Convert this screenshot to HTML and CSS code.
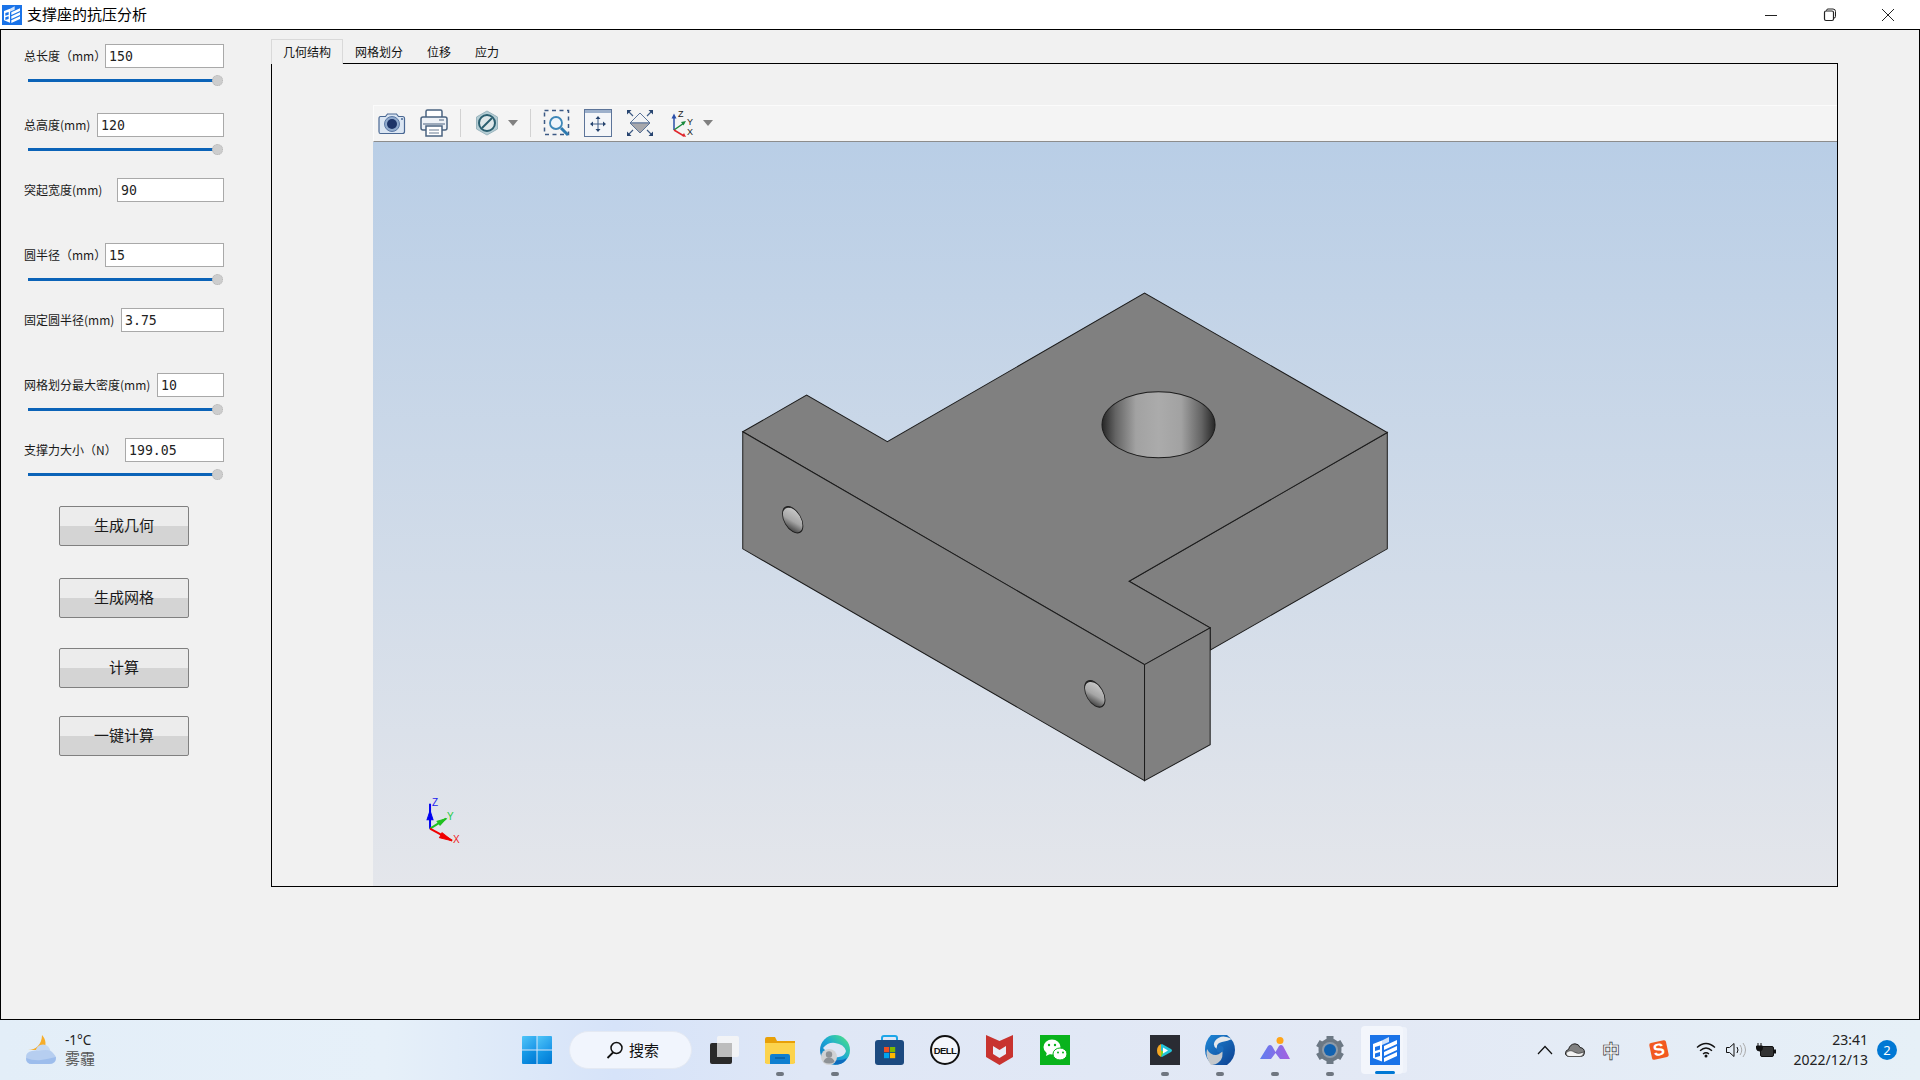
FILE: index.html
```html
<!DOCTYPE html>
<html lang="zh">
<head>
<meta charset="utf-8">
<title>支撑座的抗压分析</title>
<link rel="stylesheet" href="styles.css">
</head>
<body>
<header class="titlebar">
  <svg class="app-icon" viewBox="0 0 30 30"><use href="#appmark"/></svg>
  <span class="title">支撑座的抗压分析</span>
  <div class="win-btns">
    <svg class="wb" viewBox="0 0 14 14"><path d="M1 7.5h12" stroke="#222" fill="none"/></svg>
    <svg class="wb" viewBox="0 0 14 14"><path d="M3.5 2.8V2.5q0-1.5 1.5-1.5h5q2.5 0 2.5 2.5v5q0 1.5-1.5 1.5" stroke="#222" fill="none"/><rect x="1.5" y="3" width="9" height="9.5" rx="1.5" stroke="#222" fill="none" stroke-width="1.2"/></svg>
    <svg class="wb" viewBox="0 0 14 14"><path d="M1 1l12 12M13 1L1 13" stroke="#222" fill="none"/></svg>
  </div>
</header>

<div class="window">
  <aside class="side">
    <div class="group first">
      <div class="row"><label>总长度（mm）</label><input class="in w119" value="150"></div>
      <div class="slider"><i class="fill"></i><i class="thumb"></i></div>
    </div>
    <div class="group">
      <div class="row"><label>总高度(mm)</label><input class="in w127" value="120"></div>
      <div class="slider"><i class="fill"></i><i class="thumb"></i></div>
    </div>
    <div class="group">
      <div class="row"><label>突起宽度(mm)</label><input class="in w107" value="90"></div>
    </div>
    <div class="group">
      <div class="row"><label>圆半径（mm）</label><input class="in w119" value="15"></div>
      <div class="slider"><i class="fill"></i><i class="thumb"></i></div>
    </div>
    <div class="group">
      <div class="row"><label>固定圆半径(mm)</label><input class="in w103" value="3.75"></div>
    </div>
    <div class="group">
      <div class="row"><label>网格划分最大密度(mm)</label><input class="in w67" value="10"></div>
      <div class="slider"><i class="fill"></i><i class="thumb"></i></div>
    </div>
    <div class="group">
      <div class="row"><label>支撑力大小（N）</label><input class="in w99" value="199.05"></div>
      <div class="slider"><i class="fill"></i><i class="thumb"></i></div>
    </div>
    <button class="btn b1">生成几何</button>
    <button class="btn b2">生成网格</button>
    <button class="btn b3">计算</button>
    <button class="btn b4">一键计算</button>
  </aside>

  <main class="main">
    <nav class="tabs">
      <span class="tab active">几何结构</span>
      <span class="tab">网格划分</span>
      <span class="tab">位移</span>
      <span class="tab">应力</span>
    </nav>
    <section class="frame">
      <div class="toolbar">
        <svg class="tool t-cam" width="28" height="24" viewBox="0 0 28 24"><path d="M2.5 5.5h5l2-2.5h9l2 2.500h4q2 0 2 2v13q0 2-2 2h-22q-1.500 0-1.500-2v-13q0-2 1.500-2z" fill="#dbe6f3" stroke="#4a6893" stroke-width="1.2"/><circle cx="14" cy="13" r="7.500" fill="#8fa9cc" stroke="#5c7aa6"/><circle cx="14" cy="13" r="5" fill="#1d3468"/><circle cx="24" cy="8" r="1" fill="#4a6893"/></svg>
        <svg class="tool t-print" width="28" height="28" viewBox="0 0 28 28"><rect x="6" y="1" width="16" height="8" rx="1.500" fill="#fff" stroke="#4a6380" stroke-width="1.500"/><path d="M3 8h22q2 0 2 2v9q0 2-2 2H3q-2 0-2-2v-9q0-2 2-2z" fill="#eef2f7" stroke="#4a6380" stroke-width="1.500"/><path d="M3 15h22" stroke="#4a6380"/><rect x="6" y="17" width="16" height="10" fill="#fff" stroke="#4a6380" stroke-width="1.500"/><path d="M9 21h10M9 24h10" stroke="#9aa8b8" stroke-width="1.500"/><path d="M19 11h5" stroke="#8796a8" stroke-width="1.500"/></svg>
        <i class="sep s1"></i>
        <svg class="tool t-clip" width="24" height="26" viewBox="0 0 24 26"><path d="M12 1l10.500 6v12l-10.500 6L1.500 19V7z" fill="#b4cdd4" stroke="#9ab5be"/><circle cx="12" cy="13" r="8" fill="#dfe8ea" stroke="#2b5f70" stroke-width="2"/><path d="M7 18L17 8" stroke="#2b5f70" stroke-width="2"/></svg>
        <i class="caret c1"></i>
        <i class="sep s2"></i>
        <svg class="tool t-zoom" width="28" height="28" viewBox="0 0 28 28"><rect x="1.500" y="1.500" width="24" height="24" fill="none" stroke="#3c5a85" stroke-width="1.500" stroke-dasharray="4 3.500"/><circle cx="13" cy="14" r="6" fill="#eef5fb" stroke="#3d87b8" stroke-width="1.800"/><path d="M18 19l7 7" stroke="#2d7ab0" stroke-width="3"/></svg>
        <svg class="tool t-fit" width="28" height="28" viewBox="0 0 28 28"><rect x="0.500" y="0.500" width="27" height="27" fill="#f4f6f9" stroke="#5c7499"/><rect x="1" y="1" width="26" height="3" fill="#9db0cb"/><path d="M14 9v12M8 15h12" stroke="#3c5a85"/><path d="M14 7l-2.500 3h5zM14 23l-2.500-3h5zM6 15l3-2.500v5zM22 15l-3-2.500v5z" fill="#27446f"/></svg>
        <svg class="tool t-view" width="28" height="28" viewBox="0 0 28 28"><path d="M14 4l10 10H4z" fill="#f2f3f5" stroke="#5c7499"/><path d="M4 14h20L14 24z" fill="#a8a8ac" stroke="#5c7499"/><path d="M7 7L2.500 2.500M21 7l4.500-4.500M7 21l-4.500 4.500M21 21l4.500 4.500" stroke="#3c5a85" stroke-width="1.200"/><path d="M1 1h4.500L1 5.500zM27 1h-4.500L27 5.500zM1 27h4.500L1 22.500zM27 27h-4.500l4.500-4.500z" fill="#27446f"/></svg>
        <svg class="tool t-axes" width="24" height="30" viewBox="0 0 24 30"><path d="M4 22V9" stroke="#2a4fa8" stroke-width="1.500"/><path d="M4 5.500l-2.500 5h5z" fill="#2a4fa8"/><path d="M4 22l10-7" stroke="#1b8a3d" stroke-width="1.500"/><path d="M16 13l-5 1 2.500 3.500z" fill="#1b8a3d"/><path d="M4 22l10 6" stroke="#e0262c" stroke-width="1.500"/><path d="M16 29l-2-4-2 3z" fill="#e0262c"/><text x="8" y="9" class="ax-t">Z</text><text x="17" y="17" class="ax-t">Y</text><text x="17" y="27" class="ax-t">X</text></svg>
        <i class="caret c2"></i>
      </div>
      <div class="view">
        <svg class="scene" viewBox="373 142 1463 743">
          <defs>
            <linearGradient id="bore" x1="0" x2="1" y1="0" y2="0">
              <stop offset="0" stop-color="#262626"/><stop offset=".12" stop-color="#646464"/><stop offset=".3" stop-color="#a2a2a2"/><stop offset=".5" stop-color="#ababab"/><stop offset=".7" stop-color="#a2a2a2"/><stop offset=".88" stop-color="#646464"/><stop offset="1" stop-color="#262626"/>
            </linearGradient>
            <linearGradient id="pin" x1="0" x2="0" y1="0" y2="1">
              <stop offset="0" stop-color="#c8c8c8"/><stop offset=".55" stop-color="#a5a5a5"/><stop offset="1" stop-color="#444"/>
            </linearGradient>
          </defs>
          <g class="model">
            <polygon points="1128.500,580.700 1386.600,432 1386.600,548.300 1210,649.300 1209.600,627.300"/>
            <polygon points="742.500,431.300 806.300,394.700 887,441.300 1144,292.700 1386.600,432 1128.500,580.700 1209.600,627.300 1144,664"/>
            <polygon points="742.500,431.300 1144,664 1144,780 742.500,548.300"/>
            <polygon points="1144,664 1209.600,627.300 1209.600,744 1144,780"/>
            <ellipse cx="1158" cy="424.300" rx="56.500" ry="33" fill="url(#bore)"/>
            <g transform="translate(792.400 519.300) matrix(.866 .5 0 1 0 0)">
              <circle r="11.800" fill="url(#pin)"/>
              <path d="M-11.800 -1 A11.800 11.800 0 0 1 4 -11 A 14 14 0 0 0 -11.800 -1z" fill="#222" stroke="none"/>
            </g>
            <g transform="translate(1094.300 693.300) matrix(.866 .5 0 1 0 0)">
              <circle r="11.800" fill="url(#pin)"/>
              <path d="M-11.800 -1 A11.800 11.800 0 0 1 4 -11 A 14 14 0 0 0 -11.800 -1z" fill="#222" stroke="none"/>
            </g>
          </g>
          <g class="triad">
            <path d="M430 828V803" stroke="#0000f0" stroke-width="2"/><path d="M430 810l-3 9h6z" fill="#0000f0" stroke="#0000f0"/>
            <path d="M430 828l16-10" stroke="#20c020" stroke-width="2"/><path d="M446 818l-9 2.500 3 4z" fill="#20c020" stroke="#20c020"/>
            <path d="M430 828l22 12" stroke="#f00000" stroke-width="2"/><path d="M452 840l-10-8-2.500 5z" fill="#f00000" stroke="#f00000"/>
            <text x="432" y="805" class="tri" fill="#2222ee">Z</text>
            <text x="447" y="819" class="tri" fill="#22cc44">Y</text>
            <text x="453" y="842" class="tri" fill="#ee2222">X</text>
          </g>
        </svg>
      </div>
    </section>
  </main>
</div>

<footer class="taskbar">
  <div class="weather">
    <svg width="30" height="30" viewBox="0 0 30 30"><path d="M16 0c4 4 5 11 1 15H2c8 0 14-6 14-15z" fill="#f6ad2b"/><circle cx="17" cy="17" r="7.500" fill="#c6d9f3"/><path d="M0 22q0-5 6-6 3-1 6 0 12-3 15 2 3 3 3 5 0 6-7 6H6q-6 0-6-7z" fill="#b6cef0"/><path d="M0 23q8 3 15 2t15-3q0 7-7 7H6q-6 0-6-6z" fill="#9dbdec"/></svg>
    <div class="wtext"><span class="temp">-1°C</span><span class="cond">雾霾</span></div>
  </div>
  <svg class="start" width="30" height="30" viewBox="0 0 30 30">
    <defs><linearGradient id="w1" x1="0" y1="0" x2="1" y2="1"><stop offset="0" stop-color="#4fc5f8"/><stop offset="1" stop-color="#1a95e8"/></linearGradient>
    <linearGradient id="w2" x1="0" y1="0" x2="1" y2="1"><stop offset="0" stop-color="#1aa0ea"/><stop offset="1" stop-color="#0078d4"/></linearGradient></defs>
    <path d="M1 1h13.500v13.500H0V2q0-1 1-1z" fill="url(#w1)"/><path d="M15.500 1H29q1 0 1 1v12.500H15.500z" fill="url(#w1)"/><path d="M0 15.500h14.500V29H1q-1 0-1-1z" fill="url(#w2)"/><path d="M15.500 15.500H30V28q0 1-1 1H15.500z" fill="url(#w2)"/>
  </svg>
  <div class="search">
    <svg width="18" height="18" viewBox="0 0 18 18"><circle cx="10.500" cy="7" r="5.500" fill="none" stroke="#111" stroke-width="1.500"/><path d="M7 11.500L1.500 17" stroke="#111" stroke-width="1.800"/></svg>
    <span class="search-t">搜索</span>
  </div>
  <div class="apps">
    <span class="app"><svg viewBox="0 0 30 30"><rect x="0" y="8" width="22" height="21" rx="2" fill="#2a2a2a"/><rect x="7" y="1" width="22" height="21" rx="2" fill="#f6f6f6" fill-opacity=".85"/><rect x="7" y="8" width="15" height="14" fill="#bdbdbd"/></svg></span>
    <span class="app dot"><svg viewBox="0 0 30 28"><path d="M0 3q0-2 2-2h8l2 4h18v22H0z" fill="#e8a008"/><path d="M0 7h30v19q0 2-2 2H2q-2 0-2-2z" fill="#fcd34d"/><path d="M5 28v-8q0-2 2-2h16q2 0 2 2v8z" fill="#0f7fd0"/><path d="M10 22h10" stroke="#0a5ea0" stroke-width="1.500"/></svg></span>
    <span class="app dot"><svg viewBox="0 0 30 30"><defs><linearGradient id="ed" x1="0" y1="1" x2="1" y2="0"><stop offset="0" stop-color="#0f6cbd"/><stop offset=".5" stop-color="#1ba6d6"/><stop offset=".8" stop-color="#3bd0a0"/><stop offset="1" stop-color="#74db74"/></linearGradient></defs><circle cx="15" cy="15" r="15" fill="url(#ed)"/><path d="M3 13q5-6 12-5 9 1 11 8-1 5-7 6-5 1-9-2z" fill="#dde6f6"/><path d="M14 29q9 2 13-6-5 3-13 2z" fill="#0f6cbd"/><circle cx="9" cy="22" r="8" fill="#d0d2d4"/><circle cx="9" cy="19.500" r="3.200" fill="#8e9296"/><path d="M3.500 27q1-4.500 5.500-4.500t5.500 4.500q-5 3-11 0z" fill="#8e9296"/></svg></span>
    <span class="app"><svg viewBox="0 0 30 30"><path d="M7 6V3q0-2 2-2h11q2 0 2 2v3" fill="none" stroke="#1ca6e8" stroke-width="2"/><rect x="0" y="5" width="29" height="25" rx="3" fill="#1c4a80"/><rect x="9" y="12" width="5.200" height="5.200" fill="#f04f23"/><rect x="15" y="12" width="5.200" height="5.200" fill="#7fba00"/><rect x="9" y="18" width="5.200" height="5.200" fill="#00a4ef"/><rect x="15" y="18" width="5.200" height="5.200" fill="#ffb900"/></svg></span>
    <span class="app"><svg viewBox="0 0 30 30"><circle cx="15" cy="15" r="14" fill="#f4f6fb" stroke="#111" stroke-width="2"/><text x="15" y="18.500" class="dell">DELL</text></svg></span>
    <span class="app"><svg viewBox="0 0 30 30"><path d="M1 0l13.500 6L28 0v22l-13.500 8L1 22z" fill="#c8332f"/><path d="M8 11l6.500 4 6.500-4v8l-6.500 4-6.500-4z" fill="#e8edf7"/></svg></span>
    <span class="app"><svg viewBox="0 0 30 30"><rect width="30" height="30" fill="#09b31c"/><ellipse cx="12" cy="12" rx="8.500" ry="7.500" fill="#fff"/><path d="M7 17l-1 4 4-2z" fill="#fff"/><ellipse cx="20" cy="19" rx="7" ry="6" fill="#fff" stroke="#09b31c"/><circle cx="9" cy="10" r="1.200" fill="#09b31c"/><circle cx="15" cy="10" r="1.200" fill="#09b31c"/><circle cx="18" cy="17.500" r="1" fill="#09b31c"/><circle cx="23" cy="17.500" r="1" fill="#09b31c"/></svg></span>
    <span class="app slot"></span>
    <span class="app dot"><svg viewBox="0 0 30 30"><rect width="30" height="30" fill="#2a2c33"/><path d="M11 10q0-1 1-1l9 5q2 1.500 0 3l-9 5q-1 0-1-1z" fill="#22c3d8"/><path d="M11 9q-4 2-4 6.500t4 6.500z" fill="#f5a623"/><path d="M11 15.500l3 1-3 5.500z" fill="#7ed321"/><path d="M13 12.500l5 3-5 3z" fill="#fff"/></svg></span>
    <span class="app dot"><svg viewBox="0 0 30 30"><defs><linearGradient id="sb" x1="0" y1="0" x2="1" y2="1"><stop offset="0" stop-color="#1e88d8"/><stop offset="1" stop-color="#0d3f8f"/></linearGradient></defs><path d="M6 0h16q8 6 8 15t-8 15H8Q0 24 0 15T6 0z" fill="url(#sb)"/><path d="M6 30Q0 22 2 14q3 6 9 6 6-1 6-6 2 9-3 13-3 3-8 3z" fill="#c4c8cc"/><path d="M27 4Q16-2 10 6 7 11 12 14q-1-6 5-7 6-1 10-3z" fill="#e4e8ec"/><circle cx="15" cy="14" r="3.500" fill="#1c6dbd"/></svg></span>
    <span class="app dot"><svg viewBox="0 0 30 30"><defs><linearGradient id="mm" x1="0" y1="0" x2="1" y2="0"><stop offset="0" stop-color="#5f7ff0"/><stop offset="1" stop-color="#a55fe0"/></linearGradient></defs><circle cx="20" cy="5.500" r="3.500" fill="#ffa51a"/><path d="M0 24L8 11q2-2 4 0l3.500 6 3.500-6q2-2 4 0l7 13H20l-4.500-6-4.500 6z" fill="url(#mm)"/></svg></span>
    <span class="app dot"><svg viewBox="0 0 30 30"><circle cx="15" cy="15" r="11.500" fill="#6c7884"/><path d="M15 1v28M2.900 8l24.200 14M27.100 8L2.900 22" stroke="#6c7884" stroke-width="7"/><circle cx="15" cy="15" r="8" fill="#8d9aa8"/><circle cx="15" cy="15" r="6" fill="#1262b0"/></svg></span>
    <span class="app current"><svg viewBox="0 0 30 30"><use href="#appmark"/></svg></span>
  </div>
  <div class="tray">
    <svg class="tr-chev" width="16" height="10" viewBox="0 0 16 10"><path d="M1 9l7-7.500L15 9" fill="none" stroke="#111" stroke-width="1.200"/></svg>
    <svg class="tr-cloud" width="20" height="14" viewBox="0 0 20 14"><path d="M4 13.500Q0 13 .5 9.500 1 7 3.500 6.500 5 1 10 .8q4 .2 5 3.700 4.500.5 4.500 5 0 4-4 4z" fill="#808080" stroke="#222"/><path d="M1 10q4-4 8-1 4 3 10 0-1 4.500-4 4.500H4q-2.500 0-3-3.500z" fill="#f3f3f3" stroke="#222" stroke-width=".5"/></svg>
    <span class="tr-ime">中</span>
    <svg class="tr-sogou" width="22" height="22" viewBox="0 0 22 22"><rect x="2.500" y="2.500" width="17" height="17" rx="2" transform="rotate(-12 11 11)" fill="#f2591f"/><text x="11" y="16.500" class="sogou" transform="rotate(-12 11 11)">S</text></svg>
    <svg class="tr-wifi" width="20" height="16" viewBox="0 0 20 16"><path d="M1 5.500q9-8 18 0M4 8.800q6-5.500 12 0M7 12q3-2.500 6 0" fill="none" stroke="#111" stroke-width="1.300"/><circle cx="10" cy="14" r="1.500" fill="#111"/></svg>
    <svg class="tr-vol" width="20" height="16" viewBox="0 0 20 16"><path d="M.5 5.500h3L8 1.500v13l-4.500-4h-3z" fill="none" stroke="#111"/><path d="M11 5q2 3 0 6" fill="none" stroke="#111"/><path d="M14 3q3.500 5 0 10M17 1q5 7 0 14" fill="none" stroke="#aaa"/></svg>
    <svg class="tr-bat" width="20" height="16" viewBox="0 0 20 16"><rect x="4.500" y="4.500" width="13" height="10" rx="1.500" fill="#333" stroke="#111"/><rect x="18" y="7.500" width="2" height="4" fill="#111"/><path d="M2 1v3M5 1v3M0.500 4h6v2q0 3-3 3t-3-3z" fill="#111" stroke="#111"/></svg>
    <div class="clock"><span>23:41</span><span>2022/12/13</span></div>
    <span class="badge">2</span>
  </div>
</footer>

<svg class="defs" width="0" height="0">
  <symbol id="appmark" viewBox="0 0 30 30">
    <rect width="30" height="30" fill="#1a73e8"/>
    <path d="M3 9l9-3.500v21L3 23z" fill="#fff"/>
    <path d="M12 5.500L19 2v5l-7 3z" fill="#cfe2fb"/>
    <path d="M5 12l5-1.500v4L5 16zM5 18.500l5-1.500v4l-5 1.500z" fill="#1a73e8"/>
    <path d="M14 11l13-6v4l-13 6zM14 17l13-6v4l-13 6zM14 23l13-6v4l-13 6z" fill="#fff"/>
  </symbol>
</svg>
</body>
</html>
```
FILE: styles.css
```css
* { box-sizing: border-box; }
html, body { margin: 0; padding: 0; }
body {
  width: 1920px;
  height: 1080px;
  display: flex;
  flex-direction: column;
  overflow: hidden;
  font-family: "Noto Sans CJK SC", "Noto Sans", sans-serif;
  color: #111;
  background: #fff;
}
.defs { position: absolute; }

/* title bar */
.titlebar {
  height: 29px;
  flex: none;
  display: flex;
  align-items: center;
  padding-left: 2px;
  background: #fff;
}
.app-icon { width: 20px; height: 20px; }
.title { margin: 0 0 2px 5px; font-size: 15px; line-height: 20px; color: #000; }
.win-btns { margin-left: auto; display: flex; align-items: center; gap: 44.5px; padding-right: 25px; }
.wb { width: 14px; height: 14px; }

/* window body */
.window {
  flex: 1;
  display: flex;
  min-height: 0;
  background: #f1f1f1;
  border: 1px solid #000;
}
.side { width: 270px; flex: none; padding: 14px 47px 0 23px; display: flex; flex-direction: column; }
.group { height: 65px; flex: none; width: 200px; }
.group.first { height: 69px; }
.row { display: flex; align-items: center; height: 24px; width: 200px; }
.row label { flex: 1 1 0; min-width: 0; font-size: 12px; line-height: 24px; white-space: nowrap; color: #1a1a1a; }
.in {
  height: 24px;
  border: 1px solid #a9a9a9;
  background: #fff;
  padding: 0 3px;
  font: 13.2px "DejaVu Sans Mono", monospace;
  color: #222;
  outline: none;
  flex: none;
}
.w119 { width: 119px; }
.w127 { width: 127px; }
.w107 { width: 107px; }
.w103 { width: 103px; }
.w67 { width: 67px; }
.w99 { width: 99px; }
.slider { display: flex; align-items: center; height: 11px; margin: 7px 0 0 4px; width: 195px; }
.fill { flex: 1; height: 3px; background: #0b63b8; }
.thumb { width: 11px; height: 11px; margin-left: -5px; border-radius: 50%; background: #cdcdcd; border: 1px dotted #b5b5b5; flex: none; }
.btn {
  width: 130px;
  height: 40px;
  flex: none;
  align-self: flex-start;
  margin-left: 35px;
  border: 1px solid #808080;
  border-radius: 2px;
  background: linear-gradient(#ececec 0, #ececec 50%, #d4d4d4 50%, #d4d4d4 100%);
  font-family: inherit;
  font-size: 15px;
  color: #1a1a1a;
  padding: 0 0 3px;
}
.b1 { margin-top: 3px; }
.b2 { margin-top: 32px; }
.b3 { margin-top: 30px; }
.b4 { margin-top: 28px; }

/* main area */
.main { width: 1567px; flex: none; padding-top: 9px; display: flex; flex-direction: column; }
.tabs { display: flex; height: 25px; flex: none; margin-bottom: -1px; position: relative; z-index: 1; }
.tab { font-size: 12px; line-height: 25px; padding: 0 12px; height: 25px; color: #111; }
.tab.active { background: #f1f1f1; border: 1px solid #d9d9d9; border-bottom: 0; line-height: 24px; padding: 0 11px; }
.frame {
  height: 824px;
  flex: none;
  border: 1px solid #000;
  padding: 41px 0 0 101px;
  display: flex;
  flex-direction: column;
}
.toolbar {
  height: 37px;
  flex: none;
  display: flex;
  align-items: center;
  background: #f4f4f4;
  border-top: 1px solid #fbfbfb;
  border-left: 1px solid #fbfbfb;
  border-bottom: 1px solid #8c8c8c;
  padding: 0 0 2px 4px;
}
.tool { flex: none; }
.t-print { margin-left: 14px; }
.sep { width: 1px; height: 28px; background: #d2d2d2; flex: none; }
.s1 { margin-left: 12px; }
.t-clip { margin-left: 14px; }
.caret { width: 0; height: 0; border: 5.5px solid transparent; border-top: 6px solid #808080; border-bottom: 0; flex: none; }
.c1 { margin-left: 9px; }
.s2 { margin-left: 12px; }
.t-zoom { margin-left: 12px; }
.t-fit { margin-left: 13px; }
.t-view { margin-left: 14px; }
.t-axes { margin-left: 16px; }
.c2 { margin-left: 9px; }
.ax-t { font: 9px "Liberation Sans", sans-serif; fill: #222; }
.view { flex: 1; min-height: 0; background: linear-gradient(#b9cee6, #e4e6eb); }
.scene { display: block; width: 100%; height: 100%; }
.model polygon, .model ellipse, .model circle { stroke: #1c1c1c; stroke-width: 1; }
.model polygon { fill: #808080; stroke-linejoin: miter; }
.tri { font: 10px "Liberation Sans", sans-serif; }

/* taskbar */
.taskbar {
  height: 60px;
  flex: none;
  display: flex;
  align-items: center;
  background: linear-gradient(90deg, #e3eef8 0%, #e6f0f9 20%, #d6e3f9 32%, #dfe7f6 42%, #e3e9f5 72%, #e6f0f7 100%);
  position: relative;
}
.weather { display: flex; align-items: center; margin-left: 26px; width: 496px; gap: 9px; }
.wtext { display: flex; flex-direction: column; }
.temp { font: 13.5px/16px "Noto Sans", sans-serif; color: #222; }
.cond { font-size: 15px; line-height: 20px; color: #555; }
.start { flex: none; }
.search {
  width: 123px;
  height: 38px;
  margin-left: 17px;
  flex: none;
  border-radius: 19px;
  background: #f1f5fd;
  border: 1px solid #e4e9f3;
  display: flex;
  align-items: center;
  padding-left: 36px;
  gap: 5px;
  font-size: 15px;
  color: #111;
}
.search-t { margin-bottom: 2px; }
.apps { display: flex; align-items: center; gap: 25px; margin-left: 18px; flex: none; }
.app { width: 30px; height: 30px; position: relative; flex: none; display: block; }
.app svg { width: 30px; height: 30px; display: block; }
.app.dot::after {
  content: "";
  position: absolute;
  left: 11px;
  top: 37px;
  width: 8px;
  height: 4px;
  border-radius: 2px;
  background: #6f7680;
}
.app.current::before {
  content: "";
  position: absolute;
  left: -9px;
  top: -9px;
  width: 42px;
  height: 48px;
  border-radius: 4px;
  background: #f3f6fc;
  box-shadow: 5px 0 0 -1px #eef2fa;
}
.app.current svg { position: relative; }
.app.current::after {
  content: "";
  position: absolute;
  left: 5px;
  top: 36px;
  width: 20px;
  height: 3px;
  border-radius: 2px;
  background: #0078d4;
}
.dell { font: bold 9.5px "Liberation Sans", sans-serif; text-anchor: middle; fill: #111; letter-spacing: -.6px; }
.tray { display: flex; align-items: center; margin-left: 137px; flex: none; }
.tr-cloud { margin-left: 12px; }
.tr-ime {
  width: 20px;
  margin-left: 16px;
  font-size: 18px;
  line-height: 26px;
  font-weight: 700;
  text-align: center;
  color: #fbfcfe;
  -webkit-text-stroke: .7px #333;
  flex: none;
}
.tr-sogou { margin-left: 27px; }
.tr-wifi { margin-left: 26px; }
.tr-vol { margin-left: 10px; }
.tr-bat { margin-left: 10px; }
.sogou { font: bold 17px "Liberation Sans", sans-serif; fill: #fff; text-anchor: middle; }
.clock { width: 92px; display: flex; flex-direction: column; align-items: flex-end; font: 14px/20px "Noto Sans", sans-serif; color: #222; }
.badge {
  width: 20px;
  height: 20px;
  margin-left: 9px;
  border-radius: 50%;
  background: #0078d4;
  color: #fff;
  font: 13px/20px "Noto Sans", sans-serif;
  text-align: center;
  flex: none;
}
```
